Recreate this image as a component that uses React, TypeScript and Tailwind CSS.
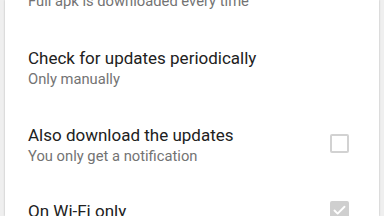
import { Check } from "lucide-react";

type Pref = {
  title: string;
  summary?: string;
  checkbox?: "off" | "on-disabled";
};

const prefs: Pref[] = [
  { title: "Check for updates periodically", summary: "Only manually" },
  {
    title: "Also download the updates",
    summary: "You only get a notification",
    checkbox: "off",
  },
  { title: "On Wi-Fi only", checkbox: "on-disabled" },
];

function Box({ state }: { state: "off" | "on-disabled" }) {
  if (state === "off") {
    return (
      <span className="block h-[19px] w-[19px] rounded-[2px] border-2 border-[#d2d2d2] bg-white" />
    );
  }
  return (
    <span className="grid h-[19px] w-[19px] place-items-center rounded-[2px] bg-[#cfcfcf]">
      <Check className="h-[15px] w-[15px] text-white" strokeWidth={3} />
    </span>
  );
}

export default function App() {
  return (
    <div
      className="h-[216px] w-[384px] overflow-hidden bg-[#efefef] px-[5px]"
      style={{ fontFamily: "Roboto, 'Noto Sans', sans-serif" }}
    >
      <div className="h-full bg-white shadow-[0_0_2px_rgba(0,0,0,0.25)]">
        {/* tail of the row above, cut by the top edge */}
        <div className="flex h-[29px] flex-col pl-[23px]">
          <p className="-mt-[9px] text-[14.75px] leading-[20px] text-[#737373]">
            Full apk is downloaded every time
          </p>
        </div>

        {prefs.map((p) => (
          <div
            key={p.title}
            className={`flex items-center pl-[23px] pr-[30px] ${
              p.summary ? "h-[77px]" : "h-[56px]"
            }`}
          >
            <div className="flex-1">
              <p className="text-[17px] leading-[22px] text-[#212121]">
                {p.title}
              </p>
              {p.summary && (
                <p className="text-[14.75px] leading-[20px] text-[#737373]">
                  {p.summary}
                </p>
              )}
            </div>
            {p.checkbox && (
              <div className="-mt-[2px]">
                <Box state={p.checkbox} />
              </div>
            )}
          </div>
        ))}
      </div>
    </div>
  );
}
